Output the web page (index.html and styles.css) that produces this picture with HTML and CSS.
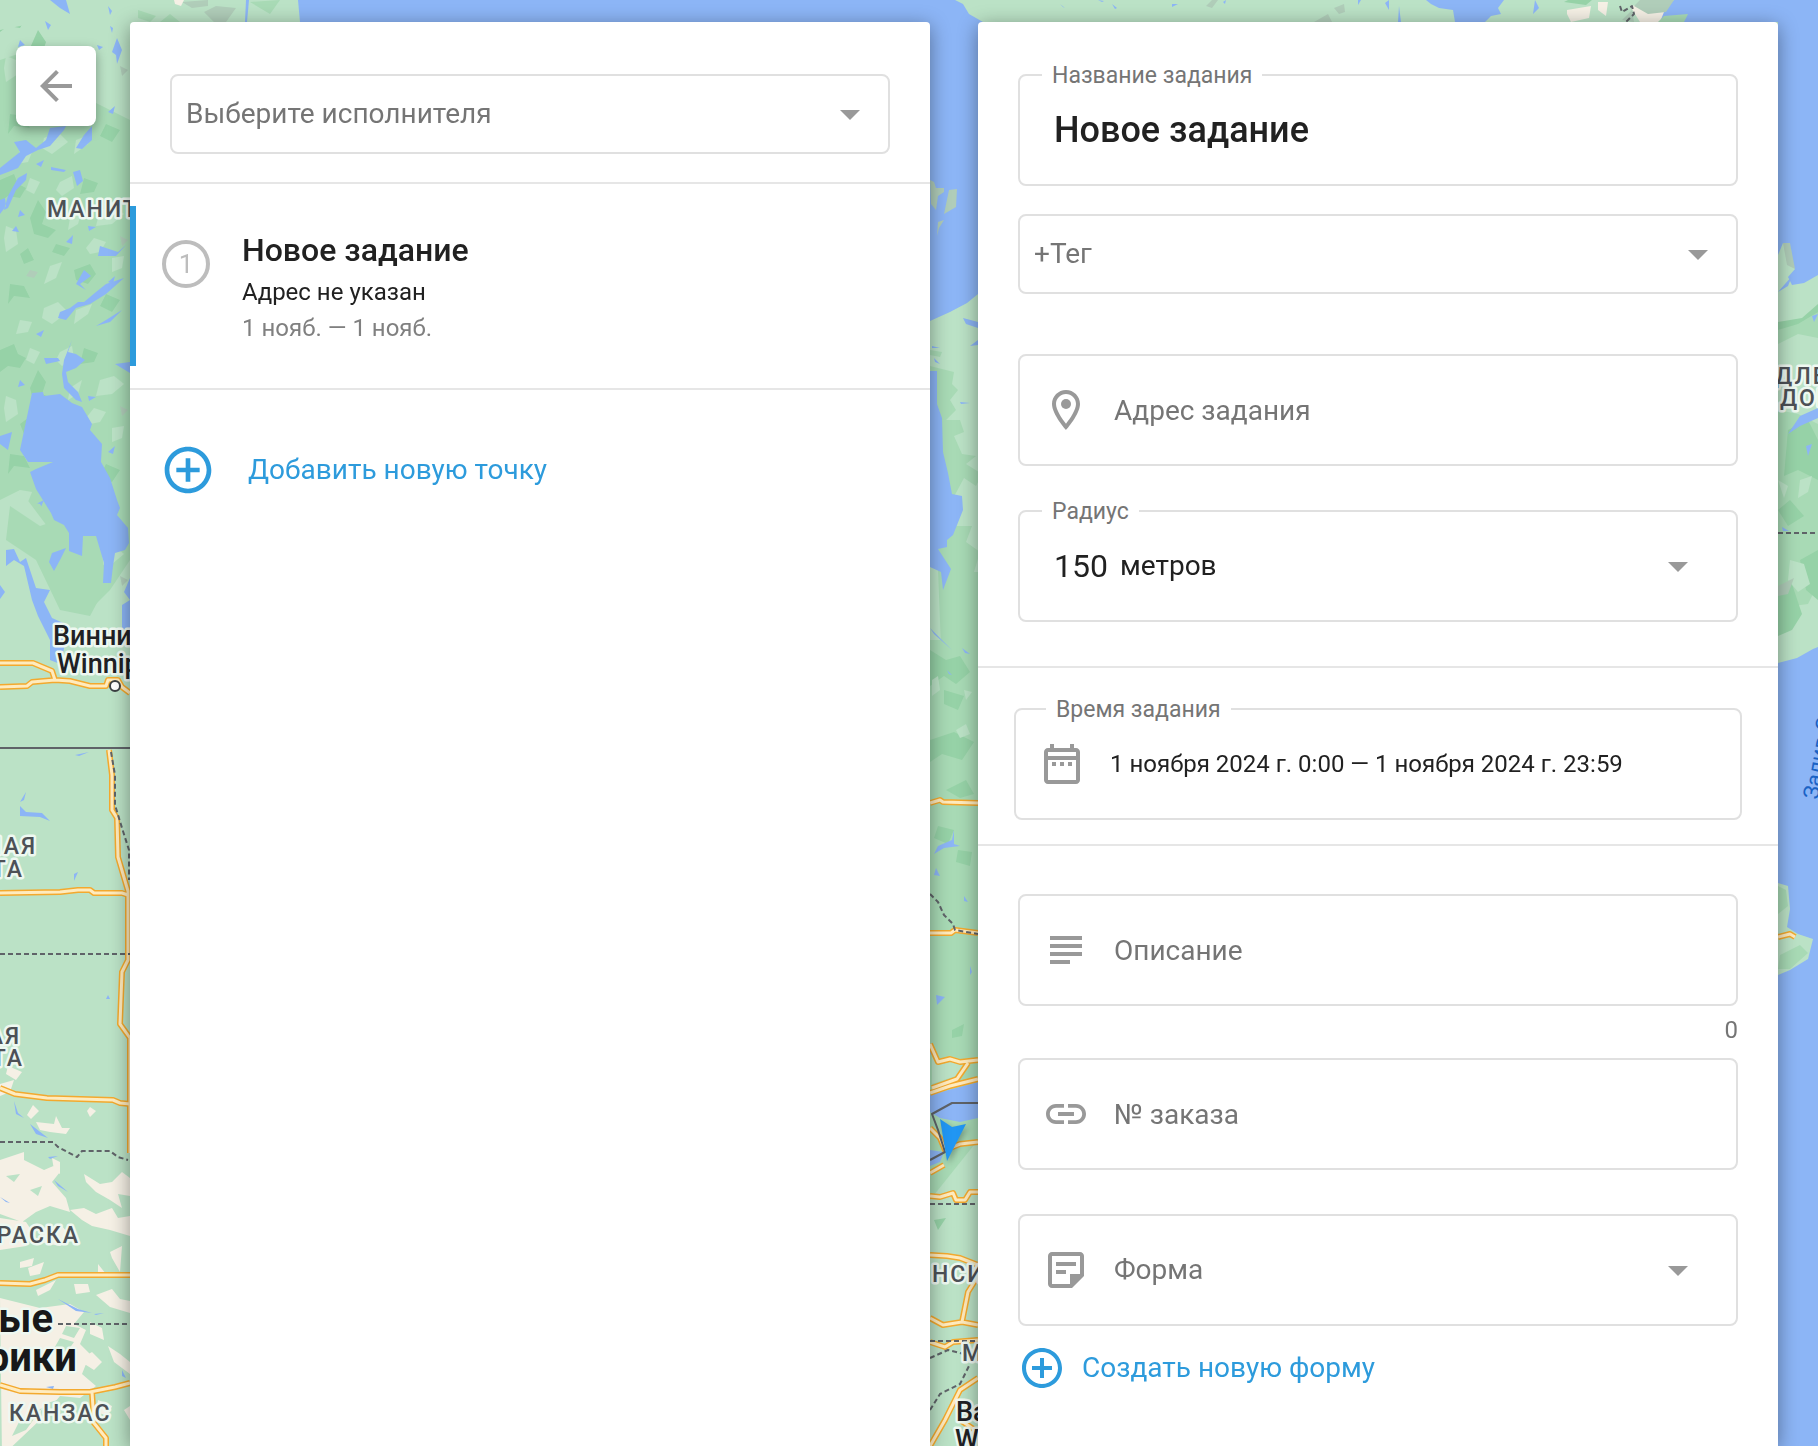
FILE: index.html
```html
<!DOCTYPE html>
<html lang="ru">
<head>
<meta charset="utf-8">
<meta name="viewport" content="width=device-width, initial-scale=1">
<title>Новое задание</title>
<link rel="stylesheet" href="styles.css">
</head>
<body>
<svg class="map" viewBox="0 0 1818 1446" preserveAspectRatio="xMidYMid slice" aria-hidden="true">
  <defs>
    <pattern id="forest" width="130" height="170" patternUnits="userSpaceOnUse">
      <path class="land-dark" d="M0 10l14-6 4 10 8 4-6 10-12-2-8 6zM38 30l8 12-4 12 14 6-8 8-14-4-4-16zM84 8l14 5-4 9-14 2zM74 100l16-6 6 10-8 10-12-4zM10 114l14 2 6 12-16-2-6 8zM106 124l14 6-8 12-12-6zM56 74l14 4-6 8-12-4zM20 84l8-6 6 12-10 4z"/>
      <path class="land-light" d="M60 12l12-6 2 12-12 8-6-6zM100 40l14-4 10 8-12 10-16 2zM6 56l10 4 2 14-12 8-2-14zM50 96l12-4-6 16-12 6zM94 68l12 4-6 10-10 2-4-6zM44 138l14-6 10 10-16 12-10-6zM112 88l12-2-2 12-10 4zM20 150l12 2-4 10-12 2zM76 140l16-6-4 10-14 10zM30 8l10 4-6 12-8-4zM70 48l12-8-4 14-10 6z"/>
      <path class="land-grey" d="M30 100l8 2-4 6-8-2zM120 66l8 4-6 6z"/>
      <path class="water" d="M20 40l5 5-7 2zM88 56l8 1-7 4zM66 72l7-7-1 9zM108 112l7-6-2 8zM36 164l8-4-3 7z"/>
    </pattern>
    <g id="roads">
      <path d="M0 663h33l19 8 3 9M0 687l27-1 5-4 23-2 15 1 20 5h16l2-6h10l4 7 8 6"/>
      <path d="M109 750l3 25v35l5 8 1 39 10 34v69l-6 12-2 52 10 14v115"/>
      <path d="M0 893l60-1 18-2h12l4 3h28l6 2M0 1088l15 6 32 4 66 2 7 3 10 1M0 1283l30 1 15-4 13-5h72M0 1385l20 6 40 1h30l25-5 15-4M92 1392l2 31 12 15v8"/>
      <path d="M930 803l10-3 3 2 35 1M930 933h21l4-3 23 3M930 1044l8 18 12-3 10 3 18-2M968 1063l-11 16-25 9M930 1093l20-7 28-7M930 1128l10 10 5 12 15-6 18-2M930 1173l14-8M930 1196l10 1 13-4 3 7h9l5-8h8M930 1255l17 1 13 2 18 7M978 1276l-10 16-6 30 16 3M930 1318l13 7 19-3M930 1342l15 5 8-5 25-2M978 1378l-18 12-15 30-15 26M960 1420l18 12M1778 937l12-3 5 3"/>
    </g>
  </defs>

  <rect class="land-light" width="1818" height="1446"/>

  <!-- Манитоба -->
  <path class="land-mid" d="M0 60l30-10 40 40 60 30v440l-20 30-20 20-30-20-10-60-30-40-20 10z"/>
  <path fill="url(#forest)" d="M0 30l30-6 60 20 40 10v560l-40-20-50-90-40-10z"/>
  <path class="land-mid" d="M10 506l30 20 30-10 30 20 6 50-16 30-30-6-24-50-30-20zM138 10l18 6-6 6-12-4zM250 2l30-2-10 14zM160 22l10-8 10 8z"/>
  <path class="land-grey" d="M182 2l26-2v6l-16 2zM204 12l12-6 20 2-10 14h-12z"/>
  <path class="sand" d="M174 0h10l-3 6-6-2z"/>
  <path class="water" d="M50 0h16l4 14-10-6zM108 6l4 5-2 4zM45 21l6 4-3 5zM246 0h3l-2 22h-2zM110 26l3 2-1 5zM117 38l5 12-5 14-1-9-4-3zM97 45l6 2-4 3zM298 0h505l170 22H300zM66 126l-16 2-4 12-10 8-10-8-12 2 6 10-10 8-10 8v7l8-3 10-4 8-12 12-6 12-4 14-16zM92 126l-8 9-8 13 6 1 10-9zM51 167l15 3-2 2-13-2zM73 172l7-2 3 11-6 5zM27 173l-9 5-10 18-4 14 4-2 8-18 10-10zM0 200l5-2 1 8-6 8zM16 226l3 6-7-1zM126 245l-8 7-18-6-2 10h18zM84 270l7 6-11 8 6 6-10-6zM124 278l-18 6-10 8-12 10h-6l-8 6-10 4-2 6 8 2 10-12 14-4 16-10zM122 310l-16 10-10 6 14-4zM72 340l-4 12 8 2 9 6-9 8-10 4 2 10 10 10 4 10-6-2-12-12-2-14 2-14zM44 358h14l2 3-14 3zM115 364l15-2v11zM0 436l12-4-4 18-8-6z"/>
  <path class="water" d="M32 393l11-1 1 4 16-2 12 9 10 4 10 17-2 6 12 14-1 18 9 16 7 22 3 8-3 7 11 13 1 15-4 7-10 3-2 13-2 17h-8l1-20-8-27h-13l-1 20-13-5v-18l-5-8-10-5-3-7-15-24-6-17 6-3 17-7H28l-8-12zM6 550l8-1 6 13 6-4 10 30 14 2-6 12 8 16 18 8-10 38-10-4v-20l-12-24-6-16-8-34-10-6-8 6zM52 553l14-5-6 12-6 11-5-9zM130 578l-6 14 6 8-8 5v22l8 13zM0 585l5 7-5 7zM75 755l14-3-10 4zM26 792l-6 10 4-2zM20 806l6 6 16 1 8 8-10-4-20-1zM74 874l4-2-4 9zM14 1101l4 12 6 5-8-4zM30 1124l18 14-12-4z"/>

  <!-- Великие равнины -->
  <path class="sand" d="M8 1066l14 6-6 8-10-6zM0 1084l14-4-4 12-10 4zM33 1105l6 6-8 8-4-4zM36 1122l18 2 2-8 6 12 8 0-4 6-16-2-10-2zM90 1107l6 4-6 6-3-6zM0 1160l24-8v8l20 10 14-6 2 8-8 10 14 16 4 14-20-6-14 6-14 10-22-8zM52 1158l8 4 0 12-6-4zM84 1174l16 10 12-2 10-10 8 6v18l-12-2 4 14-12-8-14-8-10-10zM70 1210l14-2 12 6 16-6 6 10 12-2v20l-20-6-18-4-10-6zM0 1218l26 4 8 12-8 12-26 4zM40 1228l22-2 10 12-12 8-20-4zM20 1262l14-4-2 8-12 2zM110 1252l12-6-2 26-8-14zM98 1264l8 10h-8zM28 1268l16-6-4 12-10 2zM36 1290l20-10-6 10-12 6zM0 1298l40 10 30-4 14 8-10 12 12 6-6 14 10 10-8 20 14 12-16 12-20-2-20 24-38 36zM96 1295l16-6 8 10 10 2v12l-20-6zM74 1284l14 0 2 8-14 2zM90 1322l12 6 2 12-14-6zM108 1346l12 8 10 8v12l-16-12zM78 1360l14-8 10 10-8 8zM98 1400l14 6-4 10-12-4zM124 1410l6-4v14z"/>
  <path class="land-light" d="M60 1338l14 4-10 14-12-4zM20 1420l22-12-16 22-14 6zM66 1326l14 2-6 10-12-4zM30 1190l12-4-4 10zM12 1232l14 2-8 8zM44 1404l20-6-8 14-18 6zM6 1176l14-2-6 8z"/>
  <path class="water" d="M58 1299l20 10 14 4-16-2zM94 1314l10-1-8 2zM46 1387l8-1-1 3zM122 1370l4 8-4-2zM0 1197l10 6-4-1zM48 1157l10-1-8 3zM108 995l2 4h-4zM54 1180l14 12-10-6z"/>

  <!-- Залив и Онтарио -->
  <path class="water" d="M803 0h152l8 4 6 10 14 8-5 272-11 9-17 9-20 9H803z"/>
  <path class="land-grey" d="M930 180l4 2 2 6h8v4l-6 4-2 14-5-6zM949 190l8-1-1 18-12 7zM938 222l6-2-5 8-2 8z"/>
  <path class="land-mid" d="M930 350l12 2-2 5-10-2zM930 366l16 4 8 2-2 12 6 6-8 10 6 10-10 10h14l4 12-10 4 8 18 14 2-10 8 16 10-6 12-12-8-14 26 4 22 18 0-6 16 14 10-6 20 16 0v100h-48z"/>
  <path class="land-mid" d="M930 640h48v500l-48 60z"/>
  <path class="land-dark" d="M930 650l16 10 14-4 10 16-14 12-12-8-14 10zM944 690l20 6-6 14-14-6zM930 740l24-8 20 10-12 18-20-6-12 8zM946 790l20-10 8 14-14 4zM938 826l16 4-6 14-14-6zM958 850l14 2-2 14-14-4zM952 1030l12-6-2 12-10 2zM934 1220l12-2-8 12z"/>
  <path class="land-light" d="M932 680l6-4 2 14-8 6zM956 730l10-6 4 10-10 4zM964 690l8 2-6 8zM932 1056l16 6 20-2-12 16-24 8zM940 1230l20-4-14 30-14 10z"/>
  <path class="water" d="M930 371h7v33l5 14 1 34 5 21 4 21 10 2 1 14-10 25-6 5v7l-9 2 13 20-8 21-2-18-11-5zM963 318l15 4v6l-12-4zM970 346l8-6v5zM932 346l8 2h-8zM934 358l6 6-5-2zM960 402l10 1-9 1zM930 628l22 22-18-16zM962 648l8 6-5-1zM947 670l5 5-3-1zM938 846l14-6 2-10v14l6 2-16 2-10 6zM936 868l4 8-6-1zM964 896l4 6-4-1zM930 1095l48-13v36l-18 4-20-4-10-6zM930 1150l14 2-4 10-10 4zM936 995l9 2-8 8zM970 966l2 6-2 3zM930 1046l4 10-4-2z"/>

  <!-- Северное побережье -->
  <path class="land-grey" d="M1206 6l6-6h6l-6 8zM1314 22l14-8 4 8zM1334 8l10-4 1 8-6 2z"/>
  <path class="water" d="M1060 4l5 4-2-1zM1070 2l3 4zM1098 0l6 1-2 1zM1112 4l5 4-2 1zM1172 4l6 0-6 3zM1223 2l3-2-1 4zM1358 0h3l-3 5zM1385 3l4-3v10zM1399 6l2 16h-3zM1426 0h78l-6 8 3 6-10 2-6 6h-30l-2-12-14-2-8-4zM1535 0l4 8-6 6zM1674 0h144v300h-40V22h-130z"/>
  <path class="sand" d="M1567 10l24-4-2 12-18 4-4-8zM1598 2h10l-2 14-8-6zM1630 6l18-2 16 8-4 10h-20z"/>
  <path class="land-dark" d="M1564 2l22 3 6-5h-24z"/>
  <path class="land-grey" d="M1622 20l10-10 2 12zM1640 0h34l-8 12-18 2-14-8z"/>
  <path class="land-mid" d="M1664 16l24-2-4 8h-26z"/>
  <path class="border dashed" d="M1620 6l2 6 10-6 2 8-8 8"/>

  <!-- Лабрадор и Ньюфаундленд -->
  <path class="water" d="M1778 22h40v1424h-40z"/>
  <path class="land-light" d="M1778 255l5-12h7l-2 18 7 8-7 8 4 8 12-2 14-8v372l-5 2-16 9-19 5z"/>
  <path class="land-grey" d="M1783 243h7l5 26-8-4z"/>
  <path class="land-mid" d="M1778 330l20-8 20-14v30l-20-4-20 10zM1778 410l20 4 20 10v160l-10 20-30 4z"/>
  <path class="land-dark" d="M1778 322l24-4 16-14v8l-20 12-20 6zM1788 430l20-10 10 20v40l-20-10-14 6zM1778 510l12-10 14 16-16 10zM1778 590l14-6 10 30-10 16-14 6zM1800 560l18-10v50l-12-10z"/>
  <path class="land-light" d="M1790 560l14 4 6 20-12 8-10-12zM1778 480l10 6-4 12zM1800 480l12-4-4 16-10 6z"/>
  <path class="land-grey" d="M1778 586l16-8-6 16-10 2z"/>
  <path class="water" d="M1778 292l14-16-4 10zM1788 434l12-18 18-8v10l-18 8zM1806 446l6-2-4 12zM1782 527l7 4h-6zM1812 316l6-2-4 8z"/>
  <path class="land-light" d="M1778 883l10 3 2 23-3 18 11 7 15 5-5 20-18 11-12 5z"/>
  <path class="land-mid" d="M1778 886l8 4 2 16-10 8zM1780 955l20-10 8 8-18 16h-12z"/>

  <use class="road-edge" href="#roads"/>
  <use class="road" href="#roads"/>
  <path class="border" d="M0 748h130M978 1103h-26l-20 11 6 16 7 22-15 8"/>
  <path class="border dashed" d="M111 752l4 23v30l7 23 7 22v30M0 954h130M0 1142h53l5 5 19 10 5-6h28l8 6 10 3M58 1324h72M930 894l8 8 6 13 9 9 2 6 23 4M930 1204h48M930 1341h48M930 1358l18-8 16 4M930 1410l10-16 20-10 10-20M1778 533h40"/>
  <circle class="town" cx="115" cy="686" r="5"/>

  <g class="region">
    <text x="47" y="217">МАНИТ</text>
    <text x="37" y="854" text-anchor="end">НАЯ</text>
    <text x="24" y="877" text-anchor="end">ТА</text>
    <text x="21" y="1044" text-anchor="end">АЯ</text>
    <text x="24" y="1066" text-anchor="end">ТА</text>
    <text x="80" y="1243" text-anchor="end">РАСКА</text>
    <text x="9" y="1421">КАНЗАС</text>
    <text x="932" y="1282">НСИ</text>
    <text x="962" y="1361">М</text>
    <text x="1775" y="384">ДЛЕ</text>
    <text x="1780" y="406">ДОР</text>
  </g>
  <g class="city">
    <text x="53" y="645">Винни</text>
    <text x="57" y="673">Winnip</text>
    <text x="956" y="1421">Ва</text>
    <text x="955" y="1449">W</text>
  </g>
  <g class="country">
    <text x="53" y="1332" text-anchor="end">ые</text>
    <text x="77" y="1371" text-anchor="end">рики</text>
  </g>
  <text class="sea" transform="translate(1818 800) rotate(-80)">Залив С</text>
  <path class="marker" d="M940 1119l12 8 14-3-19 37z"/>
</svg>

<main class="workspace">
  <button class="back" type="button" aria-label="Назад">
    <svg class="icon" viewBox="0 0 24 24"><path d="M20 11H7.83l5.59-5.59L12 4l-8 8 8 8 1.41-1.41L7.83 13H20v-2z"/></svg>
  </button>

  <section class="panel">
    <div class="assignee">
      <div class="field field-compact">
        <select class="control" aria-label="Исполнитель"><option>Выберите исполнителя</option></select>
        <svg class="icon arrow" viewBox="0 0 24 24"><path d="M7 10l5 5 5-5z"/></svg>
      </div>
    </div>
    <article class="task">
      <span class="task-number">1</span>
      <div class="task-text">
        <h2 class="task-title">Новое задание</h2>
        <p class="task-line">Адрес не указан</p>
        <p class="task-line task-dates">1 нояб. — 1 нояб.</p>
      </div>
    </article>
    <button class="link-button add-point" type="button">
      <svg class="icon icon-large" viewBox="0 0 24 24"><path d="M13 7h-2v4H7v2h4v4h2v-4h4v-2h-4V7zm-1-5C6.48 2 2 6.48 2 12s4.48 10 10 10 10-4.48 10-10S17.52 2 12 2zm0 18c-4.41 0-8-3.59-8-8s3.59-8 8-8 8 3.59 8 8-3.59 8-8 8z"/></svg>
      <span>Добавить новую точку</span>
    </button>
  </section>

  <form class="panel">
    <div class="group group-main">
      <div class="field">
        <label class="field-label" for="task-name">Название задания</label>
        <input class="control control-title" id="task-name" type="text" value="Новое задание">
      </div>
      <div class="field field-compact tag">
        <select class="control" aria-label="Тег"><option>+Тег</option></select>
        <svg class="icon arrow" viewBox="0 0 24 24"><path d="M7 10l5 5 5-5z"/></svg>
      </div>
      <div class="field address">
        <svg class="icon" viewBox="0 0 24 24"><path d="M12 2C8.13 2 5 5.13 5 9c0 5.25 7 13 7 13s7-7.75 7-13c0-3.87-3.13-7-7-7zM7 9c0-2.76 2.24-5 5-5s5 2.24 5 5c0 2.88-2.88 7.19-5 9.88C9.92 16.21 7 11.85 7 9z"/><circle cx="12" cy="9" r="2.5"/></svg>
        <input class="control" type="text" placeholder="Адрес задания" aria-label="Адрес задания">
      </div>
      <div class="field radius">
        <label class="field-label" for="task-radius">Радиус</label>
        <input class="control control-radius" id="task-radius" type="text" value="150">
        <span class="unit">метров</span>
        <svg class="icon arrow" viewBox="0 0 24 24"><path d="M7 10l5 5 5-5z"/></svg>
      </div>
    </div>

    <div class="group group-time">
      <div class="field field-time">
        <label class="field-label" for="task-time">Время задания</label>
        <svg class="icon" viewBox="0 0 24 24"><path d="M7 11h2v2H7v-2zm14-5v14c0 1.1-.9 2-2 2H5c-1.11 0-2-.9-2-2V6c0-1.1.89-2 2-2h1V2h2v2h8V2h2v2h1c1.1 0 2 .9 2 2zM5 8h14V6H5v2zm14 12V10H5v10h14zm-4-7h2v-2h-2v2zm-4 0h2v-2h-2v2z"/></svg>
        <input class="control control-time" id="task-time" type="text" readonly value="1 ноября 2024 г. 0:00 — 1 ноября 2024 г. 23:59">
      </div>
    </div>

    <div class="group group-details">
      <div class="field">
        <svg class="icon" viewBox="0 0 24 24"><path d="M14 17H4v2h10v-2zm6-8H4v2h16V9zM4 15h16v-2H4v2zM4 5v2h16V5H4z"/></svg>
        <input class="control" type="text" placeholder="Описание" aria-label="Описание">
      </div>
      <output class="counter">0</output>
      <div class="field order">
        <svg class="icon" viewBox="0 0 24 24"><path d="M3.9 12c0-1.71 1.39-3.1 3.1-3.1h4V7H7c-2.76 0-5 2.24-5 5s2.24 5 5 5h4v-1.9H7c-1.71 0-3.1-1.39-3.1-3.1zM8 13h8v-2H8v2zm9-6h-4v1.9h4c1.71 0 3.1 1.39 3.1 3.1s-1.39 3.1-3.1 3.1h-4V17h4c2.76 0 5-2.24 5-5s-2.24-5-5-5z"/></svg>
        <input class="control" type="text" placeholder="№ заказа" aria-label="№ заказа">
      </div>
      <div class="field form-picker">
        <svg class="icon" viewBox="0 0 24 24"><path d="M5 3c-1.1 0-2 .9-2 2v14c0 1.1.9 2 2 2h10l6-6V5c0-1.1-.9-2-2-2H5zm0 2h14v9h-5v5H5V5zm2 3v2h10V8H7zm0 4v2h5v-2H7z"/></svg>
        <select class="control" aria-label="Форма"><option>Форма</option></select>
        <svg class="icon arrow" viewBox="0 0 24 24"><path d="M7 10l5 5 5-5z"/></svg>
      </div>
      <button class="link-button" type="button">
        <svg class="icon" viewBox="0 0 24 24"><path d="M13 7h-2v4H7v2h4v4h2v-4h4v-2h-4V7zm-1-5C6.48 2 2 6.48 2 12s4.48 10 10 10 10-4.48 10-10S17.52 2 12 2zm0 18c-4.41 0-8-3.59-8-8s3.59-8 8-8 8 3.59 8 8-3.59 8-8 8z"/></svg>
        <span>Создать новую форму</span>
      </button>
    </div>
  </form>
</main>
</body>
</html>
```
FILE: styles.css
```css
* {
  box-sizing: border-box;
}

body {
  margin: 0;
  font-family: Roboto, "Liberation Sans", sans-serif;
  font-size: 28px;
  line-height: 36px;
  color: #212121;
}

/* Map behind the panels */
.map {
  position: fixed;
  inset: 0;
  z-index: -1;
  width: 100%;
  height: 100%;
}

.land-light { fill: #bbe2c6; }
.land-mid { fill: #a8dab5; }
.land-dark { fill: #96d2a7; }
.land-grey { fill: #b0cdb9; }
.sand { fill: #f5f0e5; }
.water { fill: #8cb5f6; }

.road-edge,
.road,
.border {
  fill: none;
  stroke-linejoin: round;
}

.road-edge { stroke: #f3a92e; stroke-width: 6; }
.road { stroke: #ffebbe; stroke-width: 3; }
.border { stroke: #5f6368; stroke-width: 2; }
.dashed { stroke-dasharray: 5 3; }
.town { fill: #fff; stroke: #3c4043; stroke-width: 2; }

.region,
.city,
.country {
  stroke: #eef8f1;
  stroke-width: 5;
  stroke-linejoin: round;
  paint-order: stroke;
}

.region { font-size: 23px; font-weight: 500; letter-spacing: 2px; fill: #4d5156; }
.city { font-size: 27px; font-weight: 500; fill: #202124; }
.country { font-size: 40px; font-weight: 700; fill: #17181a; }
.sea { font-size: 22px; fill: #1a62c5; }

.marker {
  fill: #2196f3;
  filter: drop-shadow(2px 3px 3px rgba(0, 0, 0, .3));
}

/* Layout */
.workspace {
  display: flex;
  align-items: stretch;
  gap: 48px;
  min-height: 100vh;
  padding: 22px 40px 0 16px;
}

.back {
  display: flex;
  flex: none;
  align-items: center;
  justify-content: center;
  align-self: flex-start;
  width: 80px;
  height: 80px;
  margin: 24px -14px 0 0;
  padding: 0;
  border: 0;
  border-radius: 8px;
  background: #fff;
  box-shadow: 0 4px 12px rgba(0, 0, 0, .35);
}

.panel {
  flex: 1;
  min-width: 0;
  border-radius: 4px 4px 0 0;
  background: #fff;
  box-shadow: 0 4px 20px rgba(0, 0, 0, .4);
}

.icon {
  flex: none;
  width: 48px;
  height: 48px;
  fill: #999;
}

/* Fields */
.field {
  position: relative;
  display: flex;
  align-items: center;
  height: 112px;
  padding: 0 34px 0 22px;
  border: 2px solid #e0e0e0;
  border-radius: 8px;
}

.field-compact {
  height: 80px;
  padding: 0 14px;
}

.field-label {
  position: absolute;
  top: -14px;
  left: 22px;
  padding: 0 10px;
  background: #fff;
  font-size: 23px;
  line-height: 28px;
  color: #757575;
}

.field-time .field-label {
  left: 30px;
}

.control {
  flex: 1;
  min-width: 0;
  height: 72px;
  padding: 0;
  border: 0;
  outline: 0;
  background: none;
  appearance: none;
  font: inherit;
  color: #757575;
}

.control::placeholder {
  color: #757575;
  opacity: 1;
}

.icon + .control {
  margin-left: 24px;
}

.field .control-title {
  padding-left: 12px;
  font-size: 36px;
  font-weight: 500;
  color: #212121;
}

.field .control-radius {
  flex: none;
  width: 66px;
  padding-left: 12px;
  font-size: 32px;
  color: #212121;
}

.unit {
  flex: 1;
  margin-left: 12px;
}

.field .control-time {
  font-size: 24px;
  color: #212121;
}

/* Task list */
.assignee {
  padding: 52px 40px 28px;
  border-bottom: 2px solid #e6e6e6;
}

.task {
  display: flex;
  gap: 32px;
  padding: 22px 0;
  border-bottom: 2px solid #e6e6e6;
}

.task::before {
  content: "";
  width: 6px;
  height: 160px;
  margin-right: -6px;
  background: #2d9bdc;
}

.task-number {
  display: flex;
  align-items: center;
  justify-content: center;
  width: 48px;
  height: 48px;
  margin-top: 34px;
  border: 4px solid #bdbdbd;
  border-radius: 50%;
  font-size: 26px;
  color: #bdbdbd;
}

.task-text {
  margin-top: 24px;
}

.task-title,
.task-line {
  margin: 0;
}

.task-title {
  margin-bottom: 4px;
  font-size: 32px;
  font-weight: 500;
  line-height: 40px;
}

.task-line {
  font-size: 24px;
  line-height: 36px;
}

.task-dates {
  color: #808080;
}

.link-button {
  display: flex;
  align-items: center;
  gap: 16px;
  padding: 0;
  border: 0;
  background: none;
  font: inherit;
  color: #2d9bdc;
}

.link-button .icon {
  fill: currentColor;
}

.link-button .icon-large {
  width: 56px;
  height: 56px;
}

.add-point {
  gap: 32px;
  margin: 52px 0 0 30px;
}

/* Task form */
.group {
  padding: 0 40px;
}

.group + .group {
  border-top: 2px solid #e6e6e6;
}

.group-main { padding-top: 52px; padding-bottom: 44px; }
.group-time { padding: 40px 36px 24px; }
.group-details { padding-top: 48px; padding-bottom: 48px; }

.tag { margin-top: 28px; }
.address { margin-top: 60px; }
.radius,
.form-picker { margin-top: 44px; }

.counter {
  display: block;
  margin: 6px 0 10px;
  font-size: 24px;
  text-align: right;
  color: #757575;
}

.group-details .link-button {
  margin-top: 18px;
}
```
